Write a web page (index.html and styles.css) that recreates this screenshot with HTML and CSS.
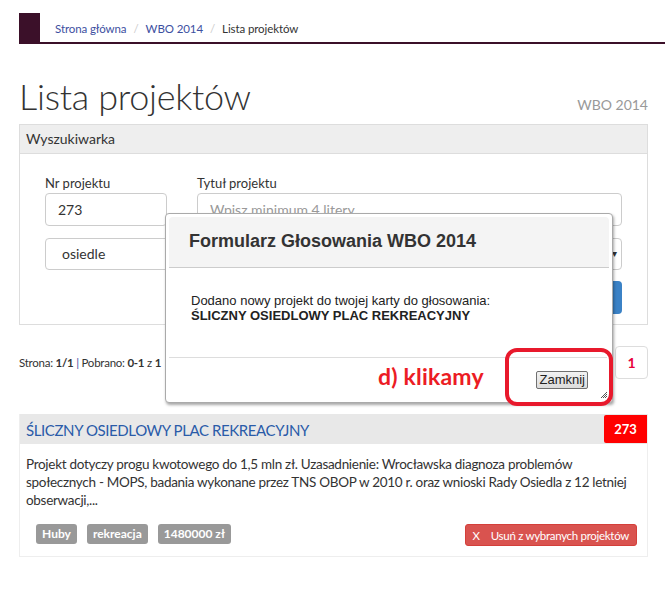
FILE: index.html
```html
<!DOCTYPE html>
<html lang="pl">
<head>
<meta charset="utf-8">
<title>Lista projektów</title>
<link rel="stylesheet" href="styles.css">
</head>
<body>
<div class="crumbs">
  <span class="brand"></span>
  <nav class="trail">
    <a href="#">Strona główna</a><span class="sep">/</span><a href="#">WBO 2014</a><span class="sep">/</span><span class="cur">Lista projektów</span>
  </nav>
</div>
<main class="page">
  <header class="title-row">
    <h1>Lista projektów</h1>
    <span class="subtitle">WBO 2014</span>
  </header>
  <section class="panel">
    <div class="panel-head">Wyszukiwarka</div>
    <div class="panel-body">
      <div class="row">
        <div class="field f-nr"><label>Nr projektu</label><div class="input">273</div></div>
        <div class="field f-title"><label>Tytuł projektu</label><div class="input placeholder">Wpisz minimum 4 litery..</div></div>
      </div>
      <div class="row">
        <div class="input select s1">osiedle</div>
        <div class="input select s2"><span class="caret">▾</span></div>
      </div>
      <div class="row end"><button class="btn-blue">Szukaj</button></div>
    </div>
  </section>
  <div class="pager-row">
    <div class="pager-info">Strona: <b>1/1</b> <span class="bar">|</span> Pobrano: <b>0-1</b> z <b>1</b></div>
    <div class="pages"><span class="page-no">1</span></div>
  </div>
  <article class="card">
    <div class="card-head">
      <h2>ŚLICZNY OSIEDLOWY PLAC REKREACYJNY</h2>
      <span class="badge">273</span>
    </div>
    <p class="card-text">Projekt dotyczy progu kwotowego do 1,5 mln zł. Uzasadnienie: Wrocławska diagnoza problemów<br>społecznych - MOPS, badania wykonane przez TNS OBOP w 2010 r. oraz wnioski Rady Osiedla z 12 letniej<br>obserwacji,...</p>
    <div class="card-foot">
      <div class="tags"><span class="tag">Huby</span><span class="tag">rekreacja</span><span class="tag">1480000 zł</span></div>
      <button class="btn-red"><span class="x">X</span>Usuń z wybranych projektów</button>
    </div>
  </article>
</main>

<div class="dialog">
  <div class="dlg-head">Formularz Głosowania WBO 2014</div>
  <div class="dlg-body">Dodano nowy projekt do twojej karty do głosowania:<br><b>ŚLICZNY OSIEDLOWY PLAC REKREACYJNY</b></div>
  <div class="dlg-foot"><button class="btn-native">Zamknij</button></div>
  <svg class="grip" width="8" height="8" viewBox="0 0 8 8"><path d="M7 1L1 7M7 3L3 7M7 5L5 7" stroke="#555" stroke-width="1"/></svg>
</div>
<div class="annot-text">d) klikamy</div>
<div class="annot-box"></div>
</body>
</html>
```

FILE: styles.css
```css
* { box-sizing: border-box; }
body {
  margin: 0;
  font-family: Lato, "Noto Sans", sans-serif;
  color: #333;
  background: #fff;
}
.crumbs {
  margin: 13px 0 0 19px;
  height: 31px;
  display: flex;
  border-bottom: 2px solid #3b1029;
}
.brand {
  width: 21px;
  background: #3b1029;
}
.trail {
  display: flex;
  align-items: center;
  padding-left: 15px;
  font-size: 11.5px;
  letter-spacing: -0.1px;
  padding-top: 1px;
}
.trail a { color: #3d4f9f; text-decoration: none; }
.trail .sep { color: #ccc; padding: 0 7px; }
.trail .cur { color: #333; }

.page { padding: 0 17px 0 19px; }
.title-row {
  display: flex;
  justify-content: space-between;
  align-items: baseline;
  margin-top: 32px;
  height: 48px;
}
.title-row h1 {
  margin: 0;
  font-size: 36px;
  font-weight: 300;
  line-height: 40px;
  letter-spacing: -0.3px;
  color: #333;
}
.subtitle { font-size: 14px; color: #999; }

.panel { border: 1px solid #ddd; }
.panel-head {
  background: #eee;
  border-bottom: 1px solid #ddd;
  height: 29px;
  padding: 0 6px;
  font-size: 14px;
  line-height: 28px;
}
.panel-body { padding: 21px 25px 10px; }
.row { display: flex; gap: 30px; }
.row + .row { margin-top: 12px; }
.row.end { justify-content: flex-end; margin-top: 11px; }
.field label { display: block; font-size: 13px; height: 18px; line-height: 16px; }
.f-nr { width: 122px; }
.f-title { flex: 1; }
.input {
  height: 33px;
  border: 1px solid #ccc;
  border-radius: 4px;
  padding: 0 12px;
  font-size: 14px;
  line-height: 31px;
  color: #333;
  position: relative;
}
.input.placeholder { color: #999; }
.select { padding-left: 16px; height: 32px; line-height: 29px; }
.s1 { width: 277px; }
.s2 { flex: 1; }
.caret { position: absolute; right: 4px; top: 0; font-size: 10px; color: #333; }
.btn-blue {
  width: 80px;
  height: 33px;
  border: 0;
  border-radius: 4px;
  background: #3b82c6;
  color: #fff;
  font: inherit;
  font-size: 14px;
}

.pager-row {
  display: flex;
  justify-content: space-between;
  align-items: center;
  margin-top: 21px;
}
.pager-info { font-size: 11.5px; letter-spacing: -0.25px; color: #333; }
.pager-info .bar { color: #3d4f9f; }
.pages {
  width: 33px;
  height: 33px;
  border: 1px solid #ddd;
  border-radius: 4px;
  display: flex;
  align-items: center;
  justify-content: center;
}
.page-no { color: #e8003a; font-weight: 700; font-size: 14px; }

.card {
  margin-top: 35px;
  border: 1px solid #eee;
  border-top: 0;
}
.card-head {
  display: flex;
  justify-content: space-between;
  background: #e8e8e8;
  height: 30px;
}
.card-head h2 {
  margin: 0;
  padding-left: 6px;
  font-size: 15px;
  font-weight: 400;
  letter-spacing: -0.4px;
  line-height: 32px;
  color: #2a5ba8;
}
.badge {
  width: 43px;
  margin-top: 1px;
  height: 28px;
  background: #ff0000;
  color: #fff;
  font-weight: 700;
  font-size: 13px;
  line-height: 28px;
  text-align: center;
  border-radius: 2px 0 0 2px;
}
.card-text {
  margin: 0;
  padding: 11px 0 0 6px;
  font-size: 13.5px;
  letter-spacing: -0.3px;
  line-height: 18px;
  white-space: nowrap;
}
.card-foot {
  display: flex;
  justify-content: space-between;
  align-items: flex-start;
  padding: 15px 10px 10px 16px;
}
.tags { display: flex; gap: 10px; }
.tag {
  background: #999;
  color: #fff;
  font-size: 12px;
  font-weight: 700;
  height: 20px;
  line-height: 20px;
  padding: 0 6px;
  border-radius: 3px;
}
.btn-red {
  background: #d9534f;
  color: #fff;
  border: 1px solid #d43f3a;
  border-radius: 3px;
  height: 22px;
  padding: 0 7px;
  font: inherit;
  font-size: 11.5px;
  letter-spacing: -0.3px;
}
.btn-red .x { margin-right: 11px; }

.dialog {
  position: absolute;
  left: 165px;
  top: 213px;
  width: 448px;
  height: 190px;
  border: 1px solid #aaa;
  border-radius: 4px;
  background: #fff;
  padding: 3px;
  box-shadow: 1px 2px 3px rgba(0,0,0,0.35);
  font-family: "Liberation Sans", Arial, sans-serif;
}
.dlg-head {
  background: #f4f4f4;
  border-radius: 4px 4px 0 0;
  height: 51px;
  border-bottom: 1px solid #ccc;
  padding-left: 20px;
  font-size: 18px;
  font-weight: 700;
  line-height: 49px;
  color: #333;
}
.dlg-body {
  height: 89px;
  padding: 25px 0 0 22px;
  font-size: 13px;
  line-height: 15px;
  color: #222;
}
.dlg-foot {
  border-top: 1px solid #ddd;
  display: flex;
  justify-content: flex-end;
  padding: 13px 19px 0 0;
  margin-right: 2px;
}
.btn-native {
  height: 18px;
  padding: 0 2px;
  border: 1px solid #707070;
  border-radius: 2px;
  background: linear-gradient(#f2f2f2, #dcdcdc);
  font-family: "Liberation Sans", Arial, sans-serif;
  font-size: 13px;
  color: #222;
  line-height: 16px;
}
.grip { position: absolute; right: 4px; bottom: 3px; }
.annot-text {
  position: absolute;
  left: 378px;
  top: 362px;
  color: #ec1c24;
  font-size: 23px;
  font-weight: 700;
  letter-spacing: 0.2px;
}
.annot-box {
  position: absolute;
  left: 505px;
  top: 348px;
  width: 108px;
  height: 58px;
  border: 4px solid #e8192c;
  border-radius: 12px;
}
```
